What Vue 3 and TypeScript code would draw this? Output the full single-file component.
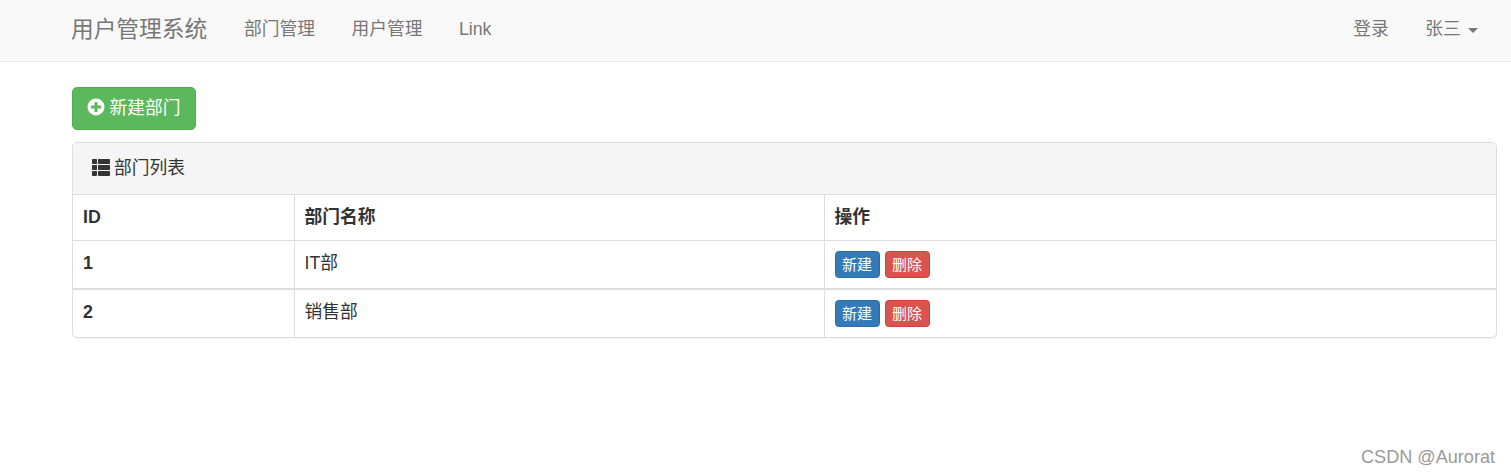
<script setup lang="ts">
interface Dept {
  id: number;
  name: string;
}

const navLinks = ['部门管理', '用户管理', 'Link'];
const depts: Dept[] = [
  { id: 1, name: 'IT部' },
  { id: 2, name: '销售部' }
];
</script>

<template>
  <div class="page">
    <nav class="navbar">
      <div class="nav-left">
        <a class="brand">用户管理系统</a>
        <a v-for="link in navLinks" :key="link" class="nav-link">{{ link }}</a>
      </div>
      <div class="nav-right">
        <a class="nav-link">登录</a>
        <a class="nav-link">张三<span class="caret"></span></a>
      </div>
    </nav>

    <main class="content">
      <button class="btn-new" type="button">
        <svg class="icon-plus" width="18" height="18" viewBox="0 0 18 18">
          <circle cx="9" cy="9" r="8.5" fill="#fff" />
          <path d="M7.5 4h3v3.5H14v3h-3.500V14h-3v-3.500H4v-3h3.500z" fill="#5cb85c" />
        </svg>
        新建部门
      </button>

      <section class="panel">
        <div class="panel-heading">
          <svg class="icon-list" width="18" height="17" viewBox="0 0 18 17" fill="#333">
            <rect x="0" y="0" width="5" height="5" rx="0.800" />
            <rect x="0" y="6" width="5" height="5" rx="0.800" />
            <rect x="0" y="12" width="5" height="5" rx="0.800" />
            <rect x="6" y="0" width="12" height="5" rx="0.800" />
            <rect x="6" y="6" width="12" height="5" rx="0.800" />
            <rect x="6" y="12" width="12" height="5" rx="0.800" />
          </svg>
          部门列表
        </div>
        <table class="table">
          <colgroup>
            <col class="col-id" />
            <col class="col-name" />
            <col />
          </colgroup>
          <thead>
            <tr>
              <th>ID</th>
              <th>部门名称</th>
              <th>操作</th>
            </tr>
          </thead>
          <tbody>
            <tr v-for="dept in depts" :key="dept.id">
              <th>{{ dept.id }}</th>
              <td>{{ dept.name }}</td>
              <td>
                <button class="btn-sm primary" type="button">新建</button>
                <button class="btn-sm danger" type="button">删除</button>
              </td>
            </tr>
          </tbody>
        </table>
      </section>
    </main>

    <div class="watermark">CSDN @Aurorat</div>
  </div>
</template>

<style>
html,
body {
  margin: 0;
  background: #fff;
}
</style>

<style scoped>
.page {
  position: relative;
  height: 474px;
  overflow: hidden;
  font-family: "Liberation Sans", "Noto Sans CJK SC", sans-serif;
  font-size: 17.75px;
  line-height: 25px;
  color: #333;
}

.navbar {
  display: flex;
  justify-content: space-between;
  height: 59px;
  padding: 0 14.500px 2px 53px;
  background: #f8f8f8;
  border-bottom: 1px solid #e7e7e7;
}

.nav-left,
.nav-right {
  display: flex;
  align-items: center;
}

.brand {
  padding: 0 18.500px 0 18px;
  font-size: 22.700px;
  color: #777;
}

.nav-link {
  padding: 0 18.250px;
  color: #777;
}

.caret {
  display: inline-block;
  margin-left: 7.500px;
  vertical-align: middle;
  border-top: 5px solid #777;
  border-left: 5px solid transparent;
  border-right: 5px solid transparent;
}

.content {
  padding: 25px 14px 0 72px;
}

.btn-new {
  display: block;
  box-sizing: border-box;
  width: 124px;
  height: 43px;
  padding: 0;
  font: inherit;
  color: #fff;
  background: #5cb85c;
  border: 1px solid #4cae4c;
  border-radius: 5px;
}

.icon-plus {
  vertical-align: -2px;
  margin-left: -1px;
}

.panel {
  margin-top: 12px;
  background: #fff;
  border: 1px solid #ddd;
  border-radius: 5px;
  box-shadow: 0 1px 1px rgba(0, 0, 0, 0.05);
  overflow: hidden;
}

.panel-heading {
  box-sizing: border-box;
  height: 52px;
  padding: 13px 19px;
  background: #f5f5f5;
  border-bottom: 1px solid #ddd;
}

.icon-list {
  vertical-align: -2px;
  margin-right: -1px;
}

.table {
  width: 100%;
  border-collapse: collapse;
  table-layout: fixed;
}

.col-id {
  width: 221px;
}

.col-name {
  width: 530px;
}

.table th,
.table td {
  box-sizing: border-box;
  padding: 10px;
  text-align: left;
  vertical-align: top;
  border-left: 1px solid #ddd;
  border-top: 1px solid #ddd;
}

.table th:first-child {
  border-left: 0;
}

.table thead tr:first-child th {
  border-top: 0;
}

.table thead th {
  height: 45px;
  border-bottom: 1px solid #ddd;
}

.table tbody tr {
  height: 48px;
}

.table tbody tr + tr th,
.table tbody tr + tr td {
  border-top: 2px solid #ddd;
}

.btn-sm {
  box-sizing: border-box;
  display: inline-block;
  width: 45px;
  height: 27px;
  padding: 0;
  margin-right: 5px;
  font-family: inherit;
  font-size: 15px;
  line-height: 23px;
  color: #fff;
  border-radius: 3.750px;
  vertical-align: top;
}

.primary {
  background: #337ab7;
  border: 1px solid #2e6da4;
}

.danger {
  background: #d9534f;
  border: 1px solid #d43f3a;
}

.watermark {
  position: absolute;
  right: 16px;
  top: 445px;
  font-size: 18.100px;
  line-height: 24px;
  color: #9a9a9a;
}
</style>
